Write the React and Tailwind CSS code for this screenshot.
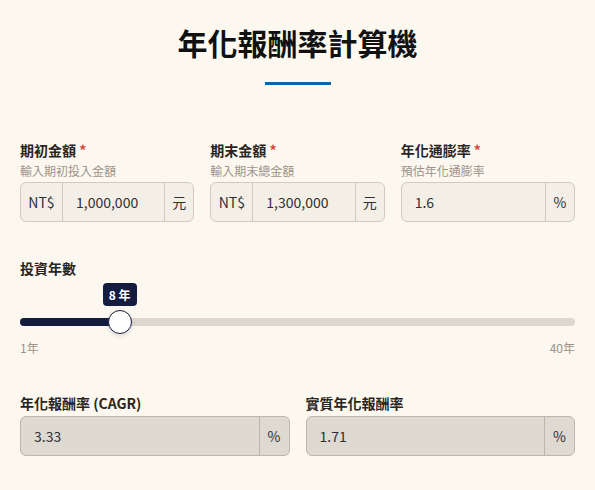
import React, { useState } from "react";

const FONT = { fontFamily: '"Noto Sans CJK TC", "Noto Sans", sans-serif' };

const Field = ({ label, hint, prefix, value, suffix }) => (
  <div className="flex flex-col">
    <div className="text-[14px] leading-[20px] font-bold text-[#2a2521]">
      {label} <span className="text-[#d9433b]">*</span>
    </div>
    <div className="mt-[3px] text-[12px] leading-[16px] text-[#9d938b]">{hint}</div>
    <div className="mt-[3px] flex h-[40px] rounded-[6px] border border-[#d2cabd] bg-[#f3efe6] text-[14px] text-[#2f2f33]">
      {prefix && (
        <div className="flex w-[42px] shrink-0 items-center justify-center border-r border-[#d2cabd]">
          {prefix}
        </div>
      )}
      <div className="flex flex-1 items-center pl-[13px]">{value}</div>
      <div className="flex w-[29px] shrink-0 items-center justify-center border-l border-[#d2cabd]">
        {suffix}
      </div>
    </div>
  </div>
);

const Result = ({ label, value }) => (
  <div className="flex flex-col">
    <div className="text-[14px] leading-[20px] font-bold text-[#2a2521]">{label}</div>
    <div className="mt-[3px] flex h-[40px] rounded-[6px] border border-[#bdb6aa] bg-[#dedad1] text-[14px] text-[#2f2f33]">
      <div className="flex flex-1 items-center pl-[13px]">{value}</div>
      <div className="flex w-[30px] shrink-0 items-center justify-center border-l border-[#bdb6aa]">
        %
      </div>
    </div>
  </div>
);

export default function App() {
  const [years] = useState(8);
  const pct = ((years - 1) / 39) * 100;

  return (
    <div style={FONT} className="min-h-screen w-[595px] bg-[#fcf8ef] px-[20px] pt-[24px]">
      {/* TITLE */}
      <h1 className="text-center text-[30px] leading-[36px] font-bold text-[#111111]">
        年化報酬率計算機
      </h1>
      <div className="mx-auto mt-[22px] h-[3px] w-[66px] bg-[#0f63a8]" />

      {/* INPUTS */}
      <div className="mt-[55px] grid grid-cols-3 gap-4">
        <Field label="期初金額" hint="輸入期初投入金額" prefix="NT$" value="1,000,000" suffix="元" />
        <Field label="期末金額" hint="輸入期末總金額" prefix="NT$" value="1,300,000" suffix="元" />
        <Field label="年化通膨率" hint="預估年化通膨率" value="1.6" suffix="%" />
      </div>

      {/* SLIDER */}
      <div className="mt-[36px] text-[14px] leading-[20px] font-bold text-[#2a2521]">投資年數</div>
      <div className="relative mt-[5px] pt-[35px]">
        <div className="relative h-[8px] rounded-full bg-[#ddd7cf]">
          <div className="h-full rounded-full bg-[#141c3f]" style={{ width: `${pct}%` }} />
        </div>
        <div
          className="absolute top-0 flex h-[23px] w-[34px] -translate-x-1/2 items-center justify-center rounded-[4px] bg-[#141c3f] text-[12px] font-bold text-white"
          style={{ left: `${pct}%` }}
        >
          {years} 年
        </div>
        <div
          className="absolute top-[27px] h-[24px] w-[24px] -translate-x-1/2 rounded-full border-[1.5px] border-[#141c3f] bg-white shadow-[0_2px_4px_rgba(0,0,0,0.12)]"
          style={{ left: `${pct}%` }}
        />
      </div>
      <div className="mt-[14px] flex justify-between text-[12px] leading-[16px] text-[#9d938b]">
        <span>1年</span>
        <span>40年</span>
      </div>

      {/* RESULTS */}
      <div className="mt-[37px] grid grid-cols-2 gap-4">
        <Result label="年化報酬率 (CAGR)" value="3.33" />
        <Result label="實質年化報酬率" value="1.71" />
      </div>
    </div>
  );
}
